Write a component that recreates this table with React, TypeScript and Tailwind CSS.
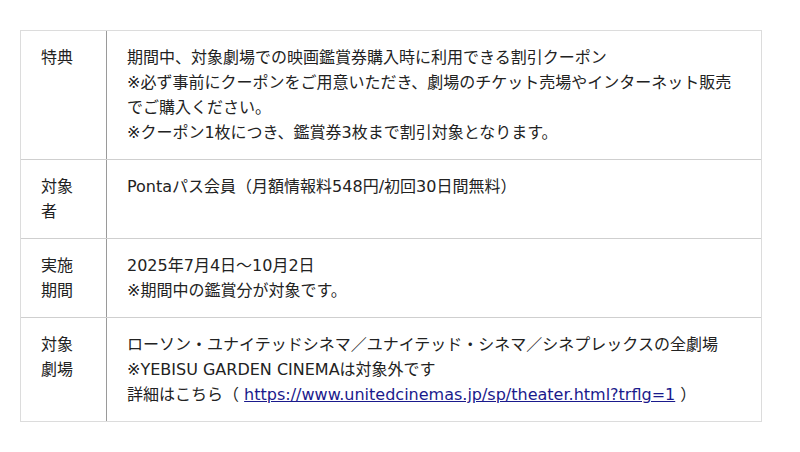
const rows = [
  {
    label: '特典',
    lines: [
      '期間中、対象劇場での映画鑑賞券購入時に利用できる割引クーポン',
      '※必ず事前にクーポンをご用意いただき、劇場のチケット売場やインターネット販売でご購入ください。',
      '※クーポン1枚につき、鑑賞券3枚まで割引対象となります。',
    ],
  },
  {
    label: '対象者',
    lines: ['Pontaパス会員（月額情報料548円/初回30日間無料）'],
  },
  {
    label: '実施期間',
    lines: ['2025年7月4日～10月2日', '※期間中の鑑賞分が対象です。'],
  },
]

export default function App() {
  return (
    <div className="min-h-[452px] bg-white pt-[30px] pl-[20px] text-[16px] leading-[25px] text-[#222] [font-family:'DejaVu_Sans','Noto_Sans_CJK_JP',sans-serif]">
      <div className="w-[742px] border border-[#dcdcdc]">
        {rows.map((row, i) => (
          <div key={row.label} className={`grid grid-cols-[86px_1fr] ${i > 0 ? 'border-t border-[#cfcfcf]' : ''}`}>
            <div className="border-r border-[#9a9a9a] px-[20px] py-[14px]">{row.label}</div>
            <div className="px-[20px] py-[14px]">
              {row.lines.map(line => (
                <p key={line}>{line}</p>
              ))}
            </div>
          </div>
        ))}
        <div className="grid grid-cols-[86px_1fr] border-t border-[#cfcfcf]">
          <div className="border-r border-[#9a9a9a] px-[20px] py-[14px]">対象劇場</div>
          <div className="px-[20px] py-[14px]">
            <p>ローソン・ユナイテッドシネマ／ユナイテッド・シネマ／シネプレックスの全劇場</p>
            <p>※YEBISU GARDEN CINEMAは対象外です</p>
            <p>
              詳細はこちら（{' '}
              <a href="#" className="text-[#1a1a8c] underline">https://www.unitedcinemas.jp/sp/theater.html?trflg=1</a>
              {' '}）
            </p>
          </div>
        </div>
      </div>
    </div>
  )
}
